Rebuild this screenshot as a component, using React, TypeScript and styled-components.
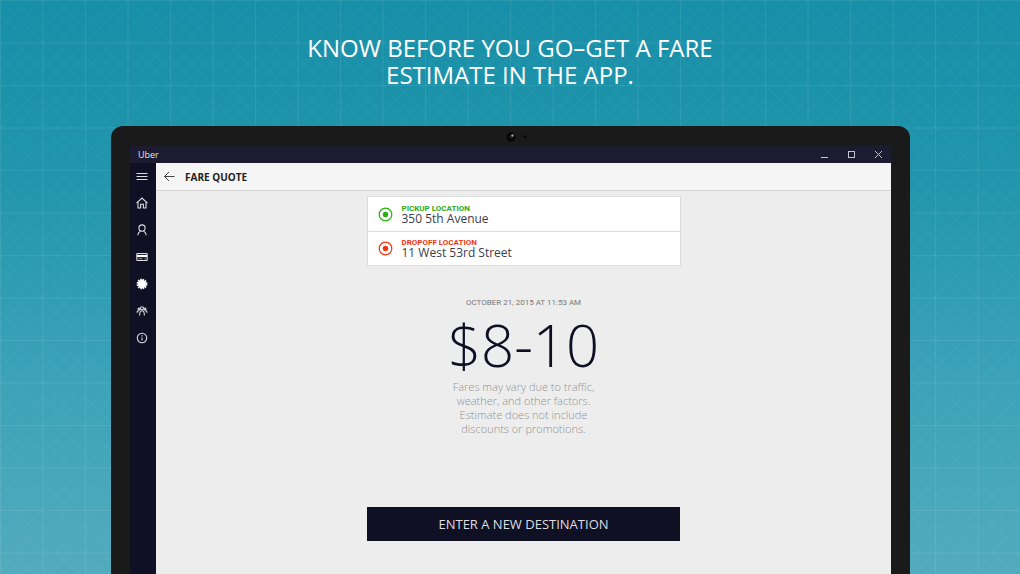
import React from "react";
import styled, { createGlobalStyle } from "styled-components";

const GlobalStyle = createGlobalStyle`
  * { box-sizing: border-box; }
  html, body { margin: 0; }
  body { font-family: "Open Sans", "Noto Sans", sans-serif; }
  button { font: inherit; padding: 0; border: 0; background: none; color: inherit; }
`;

const Page = styled.div`
  position: relative;
  display: flex;
  flex-direction: column;
  min-height: 100vh;
  background: linear-gradient(180deg, #178fa8 0%, #2095ab 30%, #3ba2b8 65%, #52abbd 100%);
`;

const Backdrop = styled.svg`
  position: absolute;
  inset: 0;
  width: 100%;
  height: 100%;
`;

const Headline = styled.h1`
  position: relative;
  margin: 0;
  padding: 34px 24px 38px;
  color: #fff;
  font-size: 24px;
  font-weight: 400;
  line-height: 27px;
  text-align: center;
`;

const Device = styled.div`
  position: relative;
  flex: 1;
  display: flex;
  flex-direction: column;
  margin: 0 110px 0 111px;
  padding: 0 19px;
  border-radius: 12px 12px 0 0;
  background: #1a1a1a;
`;

const Bezel = styled.div`
  display: flex;
  justify-content: center;
  height: 20px;
  padding-left: 14px;
`;

const TitleBar = styled.header`
  display: flex;
  align-items: center;
  justify-content: space-between;
  height: 17px;
  padding: 0 8px 1px;
  background: #1c1b30;
  color: #e4e4e8;
  font-size: 9px;
`;

const WindowControls = styled.div`
  display: flex;
  gap: 17px;
`;

const IconButton = styled.button`
  display: flex;
  svg { display: block; }
`;

const Body = styled.div`
  flex: 1;
  display: flex;
`;

const Sidebar = styled.nav`
  display: flex;
  flex-direction: column;
  align-items: center;
  gap: 13px;
  width: 26px;
  padding: 6px 2px 0 0;
  background: #101024;
  color: #dcdce2;
`;

const Main = styled.main`
  flex: 1;
  display: flex;
  flex-direction: column;
  align-items: center;
  background: #ededed;
`;

const PageHeader = styled.div`
  display: flex;
  align-items: center;
  align-self: stretch;
  gap: 9px;
  height: 28px;
  padding-left: 7px;
  border-bottom: 1px solid #d6d6d6;
  background: #f5f5f5;
  color: #222;
`;

const PageTitle = styled.h2`
  margin: 0;
  font-size: 10px;
  font-weight: 700;
`;

const Card = styled.section`
  width: 314px;
  max-width: 100%;
  margin-top: 5px;
  border: 1px solid #dcdcdc;
  background: #fff;
`;

const Stop = styled.div<{ $accent: string }>`
  display: flex;
  align-items: center;
  gap: 9px;
  height: 34px;
  padding-left: 10px;
  color: ${(p) => p.$accent};
  & + & { border-top: 1px solid #dcdcdc; }
`;

const StopLabel = styled.div`
  font-family: Roboto, sans-serif;
  font-size: 8px;
  font-weight: 700;
  line-height: 9px;
`;

const StopAddress = styled.div`
  color: #3c3c4a;
  font-size: 12px;
  line-height: 12px;
`;

const Quote = styled.section`
  display: flex;
  flex-direction: column;
  align-items: center;
  padding-top: 31px;
  text-align: center;
`;

const QuoteDate = styled.time`
  color: #77777c;
  font-family: Roboto, sans-serif;
  font-size: 8px;
  line-height: 12px;
`;

const Price = styled.div`
  color: #0e0e24;
  font-size: 58px;
  font-weight: 300;
  line-height: 71px;
`;

const Disclaimer = styled.p`
  width: 160px;
  margin: 0;
  color: #929296;
  font-size: 11px;
  font-weight: 300;
  line-height: 14px;
`;

const PrimaryButton = styled.button`
  && {
    width: 313px;
    max-width: 100%;
    height: 34px;
    margin-top: 71px;
    padding-bottom: 1px;
    background: #101024;
    color: #dedee2;
    font-size: 13px;
  }
`;

const stops = [
  { label: "PICKUP LOCATION", address: "350 5th Avenue", accent: "#2bac13" },
  { label: "DROPOFF LOCATION", address: "11 West 53rd Street", accent: "#f0370f" },
];

const menu: { name: string; art: React.ReactNode }[] = [
  { name: "Menu", art: <path d="M1.500 4.500h11M1.500 7.500h11M1.500 10.500h11" strokeWidth="1.200" /> },
  { name: "Home", art: <path d="M1.500 7.200L7 2l5.500 5.200M3 6.200V12h2.600V8.200h2.800V12H11V6.200" /> },
  { name: "Profile", art: <><circle cx="7" cy="5" r="3.100" /><path d="M2.800 12.300C3 9.800 4.300 8.500 5.500 7.900M11.200 12.300C11 9.800 9.700 8.500 8.500 7.900" /></> },
  { name: "Payment", art: <><rect x="1.800" y="3.500" width="10.400" height="7" rx=".6" /><path d="M2 6h10" strokeWidth="2.200" stroke="#fff" /><path d="M3.500 8.800h4M9.500 8.800h1.500" strokeWidth=".7" /></> },
  { name: "Promotions", art: <><circle cx="7" cy="7" r="4.200" fill="#fff" stroke="none" /><circle cx="7" cy="7" r="4.500" fill="none" stroke="#fff" strokeWidth="1.800" strokeDasharray="1.500 .856" /></> },
  { name: "Invite friends", art: <><circle cx="7" cy="4.300" r="1.500" /><circle cx="4" cy="5" r="1" /><circle cx="10" cy="5" r="1" /><path d="M4.600 11.500c0-3 1-4.700 2.400-4.700s2.400 1.700 2.400 4.700M2 8.700c.1-1.300.8-2.200 2.200-2.200M12 8.700c-.1-1.300-.8-2.200-2.200-2.200" /></> },
  { name: "About", art: <><circle cx="7" cy="7" r="4.700" /><path d="M7 6.400v3.200M7 4.300v1.200" /></> },
];

function GridBackdrop() {
  return (
    <Backdrop aria-hidden="true">
      <defs>
        <pattern id="cell" width="42.5" height="42.5" patternUnits="userSpaceOnUse">
          <g fill="none" stroke="#fff">
            <path d="M0 .5H42.500M.5 0V42.500" strokeOpacity=".08" />
            <path
              d="M0 0L42.500 42.500M42.500 0L0 42.500M14 0L42.500 28.500M28.500 0L0 28.500M0 14L28.500 42.500M42.500 14L14 42.500"
              strokeOpacity=".03"
            />
          </g>
        </pattern>
      </defs>
      <rect width="100%" height="100%" fill="url(#cell)" />
    </Backdrop>
  );
}

export default function App() {
  return (
    <Page>
      <GlobalStyle />
      <GridBackdrop />
      <Headline>
        KNOW BEFORE YOU GO–GET A FARE
        <br />
        ESTIMATE IN THE APP.
      </Headline>
      <Device>
        <Bezel>
          <svg width="28" height="20" aria-hidden="true">
            <circle cx="7" cy="11" r="4.500" fill="#050505" />
            <circle cx="7" cy="11" r="2" fill="#1c1c1e" />
            <circle cx="8.500" cy="9.500" r="1.200" fill="#a5a5a5" />
            <circle cx="21" cy="10.500" r="1.500" fill="#080808" />
          </svg>
        </Bezel>
        <TitleBar>
          <span>Uber</span>
          <WindowControls>
            <IconButton aria-label="Minimize">
              <svg width="10" height="10" stroke="#c4c4cc"><path d="M2 8.500h7" /></svg>
            </IconButton>
            <IconButton aria-label="Maximize">
              <svg width="10" height="10" fill="none" stroke="#c4c4cc"><rect x="2.500" y="2.500" width="6" height="6" /></svg>
            </IconButton>
            <IconButton aria-label="Close">
              <svg width="10" height="10" stroke="#c4c4cc"><path d="M2 2l7 7M9 2l-7 7" /></svg>
            </IconButton>
          </WindowControls>
        </TitleBar>
        <Body>
          <Sidebar>
            {menu.map((item) => (
              <IconButton key={item.name} aria-label={item.name}>
                <svg width="14" height="14" fill="none" stroke="currentColor" strokeWidth="1.1">{item.art}</svg>
              </IconButton>
            ))}
          </Sidebar>
          <Main>
            <PageHeader>
              <IconButton aria-label="Back">
                <svg width="13" height="13" fill="none" stroke="#444"><path d="M11.500 6.500H1.500M6 2L1.500 6.500L6 11" /></svg>
              </IconButton>
              <PageTitle>FARE QUOTE</PageTitle>
            </PageHeader>
            <Card>
              {stops.map((stop) => (
                <Stop key={stop.label} $accent={stop.accent}>
                  <svg width="15" height="15" aria-hidden="true">
                    <circle cx="7.500" cy="7.500" r="6.300" fill="none" stroke="currentColor" strokeWidth="1.200" />
                    <circle cx="7.500" cy="7.500" r="2.700" fill="currentColor" />
                  </svg>
                  <div>
                    <StopLabel>{stop.label}</StopLabel>
                    <StopAddress>{stop.address}</StopAddress>
                  </div>
                </Stop>
              ))}
            </Card>
            <Quote>
              <QuoteDate dateTime="2015-10-21T11:53">OCTOBER 21, 2015 AT 11:53 AM</QuoteDate>
              <Price>$8-10</Price>
              <Disclaimer>
                Fares may vary due to traffic,
                <br />
                weather, and other factors.
                <br />
                Estimate does not include
                <br />
                discounts or promotions.
              </Disclaimer>
            </Quote>
            <PrimaryButton>ENTER A NEW DESTINATION</PrimaryButton>
          </Main>
        </Body>
      </Device>
    </Page>
  );
}
